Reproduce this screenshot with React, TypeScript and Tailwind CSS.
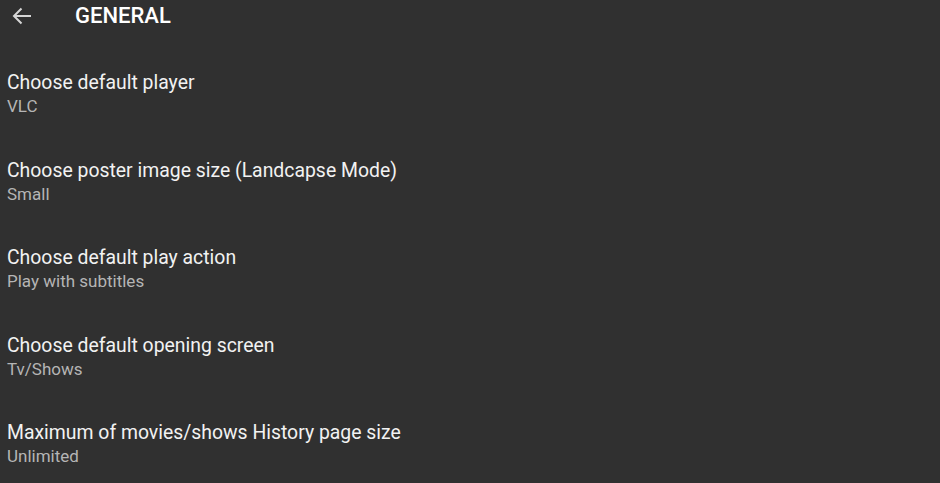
import React from "react";

const items = [
  { title: "Choose default player", value: "VLC" },
  { title: "Choose poster image size (Landcapse Mode)", value: "Small" },
  { title: "Choose default play action", value: "Play with subtitles" },
  { title: "Choose default opening screen", value: "Tv/Shows" },
  { title: "Maximum of movies/shows History page size", value: "Unlimited" },
];

export default function App() {
  return (
    <div
      className="w-[940px] h-[483px] bg-[#303030] overflow-hidden"
      style={{ fontFamily: "Roboto, 'Noto Sans', sans-serif" }}
    >
      <div className="h-[32px] flex items-center">
        <div className="w-[75px] flex items-center pl-[10px]">
          <svg width="24" height="24" viewBox="0 0 24 24" fill="none">
            <path
              d="M21 12H4M11.5 4.5L4 12l7.5 7.5"
              stroke="#d6d6d6"
              strokeWidth="2"
            />
          </svg>
        </div>
        <div className="text-[22px] font-medium text-white leading-[26px]">GENERAL</div>
      </div>
      <div className="pt-[39px]">
        {items.map((it) => (
          <div key={it.title} className="h-[87.5px] pl-[7px]">
            <div className="text-[19.4px] leading-[24px] text-[#f2f2f2]">{it.title}</div>
            <div className="text-[17px] leading-[23px] text-[#b5b5b5]">{it.value}</div>
          </div>
        ))}
      </div>
    </div>
  );
}
